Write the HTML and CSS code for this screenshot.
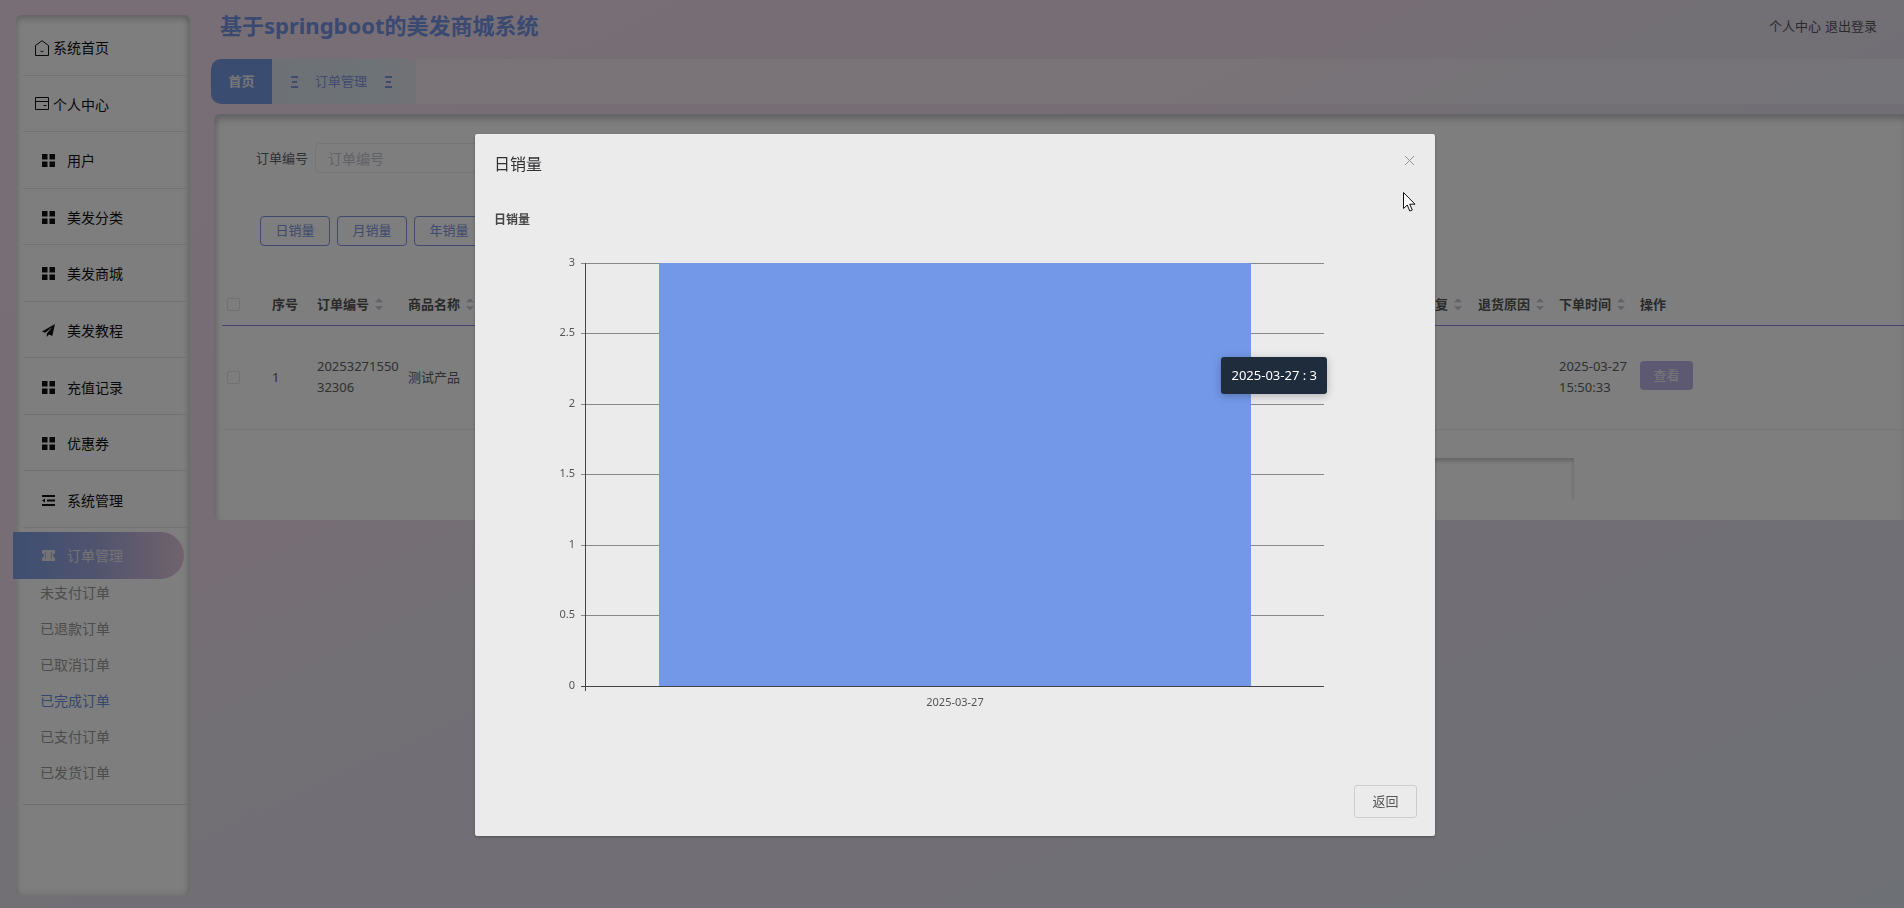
FILE: index.html
```html
<!DOCTYPE html>
<html lang="zh-CN">
<head>
  <meta charset="UTF-8">
  <meta name="viewport" content="width=device-width, initial-scale=1.0">
  <title>基于springboot的美发商城系统</title>
  <link rel="stylesheet" href="styles.css">
</head>
<body>
  <!-- Shared icons -->
  <svg class="sprite" aria-hidden="true">
    <symbol id="icon-grid" viewBox="0 0 13 13">
      <path d="M0 0h5.500v5.500H0zM7.500 0H13v5.500H7.500zM0 7.500h5.500V13H0zM7.500 7.500H13V13H7.500z" fill="currentColor"/>
    </symbol>
    <symbol id="icon-lines" viewBox="0 0 8 12">
      <path d="M1 0h7v2H1zM2 5h5v2H2zM1 10h7v2H1z" fill="currentColor"/>
    </symbol>
  </svg>

  <div class="app">
    <aside class="sidebar">
      <nav>
        <div class="menu">
          <a class="menu-item home" href="#">
            <svg width="16" height="16" viewBox="0 0 16 16" fill="none" stroke="currentColor"><path d="M1.5 5.5 8 .7l6.500 4.800V15.500h-13zM6.500 11l1.500 1 1.500-1"/></svg>
            系统首页
          </a>
          <a class="menu-item home" href="#">
            <svg width="16" height="16" viewBox="0 0 16 16" fill="none" stroke="currentColor"><path d="M1.500 1.500h13v12h-13zM1.500 5.500h13M9.500 9.500h3"/></svg>
            个人中心
          </a>
          <a class="menu-item" href="#"><svg width="13" height="13"><use href="#icon-grid"/></svg>用户</a>
          <a class="menu-item" href="#"><svg width="13" height="13"><use href="#icon-grid"/></svg>美发分类</a>
          <a class="menu-item" href="#"><svg width="13" height="13"><use href="#icon-grid"/></svg>美发商城</a>
          <a class="menu-item" href="#">
            <svg width="13" height="13" viewBox="0 0 13 13"><path d="M13 0 0 7.500l3.200 1.300L10.500 3 4.800 9.500V13l2.200-2.400 3.300 1.400z" fill="currentColor"/></svg>
            美发教程
          </a>
          <a class="menu-item" href="#"><svg width="13" height="13"><use href="#icon-grid"/></svg>充值记录</a>
          <a class="menu-item" href="#"><svg width="13" height="13"><use href="#icon-grid"/></svg>优惠券</a>
          <a class="menu-item" href="#">
            <svg width="13" height="13" viewBox="0 0 13 13"><path d="M0 1h13v2H0zM5 5.500h8v2H5zM0 10h13v2H0zM0 6.500 3 4.500v4z" fill="currentColor"/></svg>
            系统管理
          </a>
        </div>

        <a class="menu-active" href="#">
          <svg width="13" height="11" viewBox="0 0 13 11"><path d="M0 0h13v3.500a2 2 0 0 0 0 4V11H0V7.500a2 2 0 0 0 0-4z" fill="currentColor"/><path d="M3.500 2v7M9.500 2v7" stroke="#b4b8dc"/></svg>
          订单管理
        </a>
        <div class="submenu">
          <a href="#">未支付订单</a>
          <a href="#">已退款订单</a>
          <a href="#">已取消订单</a>
          <a class="current" href="#">已完成订单</a>
          <a href="#">已支付订单</a>
          <a href="#">已发货订单</a>
        </div>
      </nav>
    </aside>

    <main class="main">
      <header class="header">
        <h1>基于springboot的美发商城系统</h1>
        <div class="user-links">
          <a href="#">个人中心</a>
          <a href="#">退出登录</a>
        </div>
      </header>

      <div class="tabs">
        <a class="tab-home" href="#">首页</a>
        <a class="tab-current" href="#">
          <svg width="8" height="12"><use href="#icon-lines"/></svg>
          订单管理
          <svg width="8" height="12"><use href="#icon-lines"/></svg>
        </a>
      </div>

      <section class="panel">
        <form class="search">
          <label for="orderNo">订单编号</label>
          <input type="text" id="orderNo" placeholder="订单编号">
        </form>

        <div class="actions">
          <button type="button">日销量</button>
          <button type="button">月销量</button>
          <button type="button">年销量</button>
        </div>

        <table class="orders">
          <colgroup>
            <col class="col-check">
            <col class="col-index">
            <col class="col-order">
            <col class="col-name">
            <col>
            <col class="col-reply">
            <col class="col-reason">
            <col class="col-time">
            <col class="col-ops">
          </colgroup>
          <thead>
            <tr>
              <th><input type="checkbox" aria-label="全选"></th>
              <th>序号</th>
              <th><span class="sort">订单编号</span></th>
              <th><span class="sort">商品名称</span></th>
              <th></th>
              <th><span class="sort">回复</span></th>
              <th><span class="sort">退货原因</span></th>
              <th><span class="sort">下单时间</span></th>
              <th>操作</th>
            </tr>
          </thead>
          <tbody>
            <tr>
              <td><input type="checkbox" aria-label="选择"></td>
              <td>1</td>
              <td class="order-no">2025327155032306</td>
              <td>测试产品</td>
              <td></td>
              <td></td>
              <td></td>
              <td>2025-03-27 15:50:33</td>
              <td><button type="button" class="view">查看</button></td>
            </tr>
          </tbody>
        </table>

        <div class="pager"></div>
      </section>
    </main>
  </div>

  <!-- Daily sales dialog -->
  <div class="overlay">
    <div class="dialog" role="dialog" aria-labelledby="dialogTitle">
      <div class="dialog-header">
        <h2 id="dialogTitle">日销量</h2>
        <button type="button" class="close" aria-label="关闭">
          <svg width="11" height="11" viewBox="0 0 11 11"><path d="M1 1l9 9M10 1l-9 9" stroke="currentColor" fill="none"/></svg>
        </button>
      </div>

      <div class="chart">
        <h3>日销量</h3>
        <svg class="plot" viewBox="0 0 922 466">
          <g class="grid-lines">
            <path d="M87 33.500h743M87 103.500h743M87 174.500h743M87 244.500h743M87 315.500h743M87 385.500h743"/>
          </g>
          <rect class="bar" x="165" y="33" width="592" height="423"/>
          <path class="axis" d="M91.500 33v428M87 456.500h743"/>
          <g class="y-labels">
            <text x="81" y="36">3</text>
            <text x="81" y="106">2.5</text>
            <text x="81" y="177">2</text>
            <text x="81" y="247">1.5</text>
            <text x="81" y="318">1</text>
            <text x="81" y="388">0.5</text>
            <text x="81" y="459">0</text>
          </g>
        </svg>
        <div class="x-label">2025-03-27</div>
        <div class="tooltip">2025-03-27 : 3</div>
      </div>

      <div class="dialog-footer">
        <button type="button">返回</button>
      </div>

      <svg class="cursor" width="13" height="20" viewBox="0 0 13 20"><path d="M.5.5v16l3.700-3.500 2.600 6 2.500-1-2.600-5.800h5.300z" fill="#fff" stroke="#111"/></svg>
    </div>
  </div>
</body>
</html>
```
FILE: styles.css
```css
* {
  box-sizing: border-box;
}

body {
  margin: 0;
  height: 100vh;
  overflow: hidden;
  font-family: "Noto Sans", "Noto Sans CJK SC", sans-serif;
  font-size: 13px;
  line-height: 21px;
  color: #606266;
  background: linear-gradient(to bottom right, #f0dcec 0%, #efdbea 36%, #e4dfea 46%, #e1dfea 80%, #dbe1ea 100%);
}

h1, h2, h3 {
  margin: 0;
}

a {
  color: inherit;
  text-decoration: none;
}

button, input {
  font-family: inherit;
}

.sprite {
  position: absolute;
  width: 0;
  height: 0;
}

.app {
  display: flex;
  height: 100%;
}

/* Sidebar */
.sidebar {
  flex: none;
  width: 174px;
  margin: 15px 21px 12px 16px;
  border-radius: 6px;
  background: #fcfcfc;
  box-shadow: inset 0 4px 6px rgba(0, 0, 0, 0.2), inset -2px -2px 6px rgba(0, 0, 0, 0.1);
}

.menu {
  display: grid;
  grid-template-rows: repeat(9, 1fr);
  height: 513px;
  padding: 4px 1px 0 7px;
}

.menu-item {
  display: flex;
  align-items: center;
  gap: 12px;
  padding: 2px 19px 0;
  border-bottom: 1px solid #e2e2e2;
  font-size: 14px;
  color: #111;
}

.menu-item.home {
  gap: 3px;
  padding: 2px 11px 0;
}

.menu-active {
  display: flex;
  align-items: center;
  gap: 12px;
  width: 171px;
  height: 47px;
  margin: 4px 0 0 -3px;
  padding-left: 29px;
  border-radius: 0 24px 24px 0;
  font-size: 14px;
  color: #e6e6ea;
  background: linear-gradient(90deg, #7c9de4, #a3a8dc 50%, #e2c6da);
}

.submenu {
  display: flex;
  flex-direction: column;
  height: 226px;
  margin: 0 1px 0 7px;
  padding-left: 17px;
  border-bottom: 1px solid #dcdcdc;
  font-size: 14px;
  line-height: 36px;
  color: #999;
}

.submenu a:first-child {
  margin-top: -4px;
}

.submenu .current {
  color: #6f8fe0;
}

/* Header */
.main {
  flex: 1;
  min-width: 0;
}

.header {
  display: flex;
  justify-content: space-between;
  height: 59px;
  padding: 10px 27px 0 9px;
}

.header h1 {
  font-size: 22px;
  line-height: 30px;
  color: #7393e2;
}

.user-links {
  display: flex;
  gap: 4px;
  padding-top: 6px;
  color: #555;
}

.tabs {
  display: flex;
  height: 45px;
  border-radius: 10px 0 0 10px;
  overflow: hidden;
  background: rgba(255, 255, 255, 0.3);
}

.tab-home {
  width: 61px;
  line-height: 45px;
  text-align: center;
  font-weight: bold;
  color: #eee;
  background: #7698e2;
}

.tab-current {
  display: flex;
  align-items: center;
  gap: 17px;
  width: 144px;
  padding-left: 18px;
  color: #7f95dc;
  background: linear-gradient(90deg, #dbe3ec, #dce6ee 70%, #e6e4ec);
}

/* Content panel */
.panel {
  height: 406px;
  margin: 10px 0 0 3px;
  padding: 29px 0 0 8px;
  border-radius: 6px 0 0 6px;
  background: #fcfcfc;
  box-shadow: inset 2px 5px 6px rgba(0, 0, 0, 0.22);
}

.search {
  display: flex;
  align-items: center;
  gap: 7px;
  padding-left: 34px;
}

.search input {
  width: 200px;
  height: 30px;
  padding: 0 12px;
  border: 1px solid #ebebeb;
  border-radius: 4px;
  font-size: 14px;
  background: transparent;
}

.search input::placeholder {
  color: #c4c7ce;
}

.actions {
  display: flex;
  gap: 7px;
  padding: 43px 0 0 38px;
}

.actions button {
  width: 70px;
  height: 30px;
  padding: 0 0 3px;
  border: 1px solid #8493dc;
  border-radius: 4px;
  font-size: 13px;
  color: #7f95dc;
  background: none;
}

.orders {
  width: 100%;
  margin-top: 38px;
  border-collapse: collapse;
  table-layout: fixed;
}

.orders th,
.orders td {
  padding: 0 0 0 5px;
  text-align: left;
}

.orders th {
  height: 41px;
  border-bottom: 1px solid #8f88dc;
  color: #555;
}

.orders td {
  height: 104px;
  border-bottom: 1px solid #ececec;
}

.orders input {
  appearance: none;
  display: block;
  width: 13px;
  height: 13px;
  margin: 0;
  border: 1px solid #e0e2e8;
  border-radius: 2px;
}

.col-check,
.col-index {
  width: 45px;
}

.col-order,
.col-name {
  width: 91px;
}

.col-reply {
  width: 56px;
}

.col-reason,
.col-time {
  width: 81px;
}

.col-ops {
  width: 269px;
}

.order-no {
  word-break: break-all;
}

/* Up and down carets after a sortable heading */
.sort {
  display: flex;
  align-items: center;
  gap: 6px;
}

.sort::after {
  content: "";
  width: 8px;
  height: 12px;
  background: #c0c4cc;
  clip-path: polygon(50% 0, 100% 33%, 0 33%, 0 67%, 100% 67%, 50% 100%, 0 67%, 0 33%);
}

.view {
  display: block;
  width: 53px;
  height: 29px;
  margin-bottom: 4px;
  padding: 0 0 2px;
  border: none;
  border-radius: 4px;
  font-size: 13px;
  color: #eee;
  background: #bdb3e6;
}

.pager {
  width: 1000px;
  height: 42px;
  margin: 28px 0 0 352px;
  box-shadow: inset -1px 4px 4px -1px rgba(0, 0, 0, 0.2);
}

/* Dialog */
.overlay {
  position: fixed;
  inset: 0;
  padding: 134px 0 0 6px;
  background: rgba(0, 0, 0, 0.5);
}

.dialog {
  position: relative;
  width: 960px;
  max-width: 100%;
  margin: 0 auto;
  border-radius: 2px;
  background: #ebebeb;
  box-shadow: 0 1px 3px rgba(0, 0, 0, 0.3);
}

.dialog-header {
  display: flex;
  justify-content: space-between;
  padding: 18px 19px 0;
}

.dialog-header h2 {
  font-size: 16px;
  font-weight: normal;
  line-height: 24px;
  color: #303133;
}

.close {
  display: flex;
  width: 13px;
  height: 16px;
  padding: 3px 1px;
  border: none;
  color: #909399;
  background: none;
}

.chart {
  position: relative;
  margin: 34px 19px 0;
}

.chart h3 {
  font-size: 12px;
  line-height: 20px;
  color: #464646;
}

.plot {
  display: block;
  width: 100%;
  font-size: 11px;
}

.grid-lines {
  stroke: #888;
}

.bar {
  fill: #7398e8;
}

.axis {
  stroke: #444;
  fill: none;
}

.y-labels {
  fill: #555;
  text-anchor: end;
}

.x-label {
  font-size: 11px;
  line-height: 12px;
  text-align: center;
  color: #555;
}

.tooltip {
  position: absolute;
  top: 147px;
  right: 89px;
  padding: 8px 10px;
  border-radius: 3px;
  font-size: 13px;
  white-space: nowrap;
  color: #fff;
  background: #1e2c3c;
  box-shadow: 0 2px 8px rgba(0, 0, 0, 0.25);
}

.dialog-footer {
  display: flex;
  justify-content: flex-end;
  padding: 77px 18px 18px;
}

.dialog-footer button {
  width: 63px;
  height: 33px;
  padding: 0 0 3px;
  border: 1px solid #ccc;
  border-radius: 3px;
  font-size: 13px;
  color: #555;
  background: none;
}

.cursor {
  position: absolute;
  top: 58px;
  right: 19px;
}
```
